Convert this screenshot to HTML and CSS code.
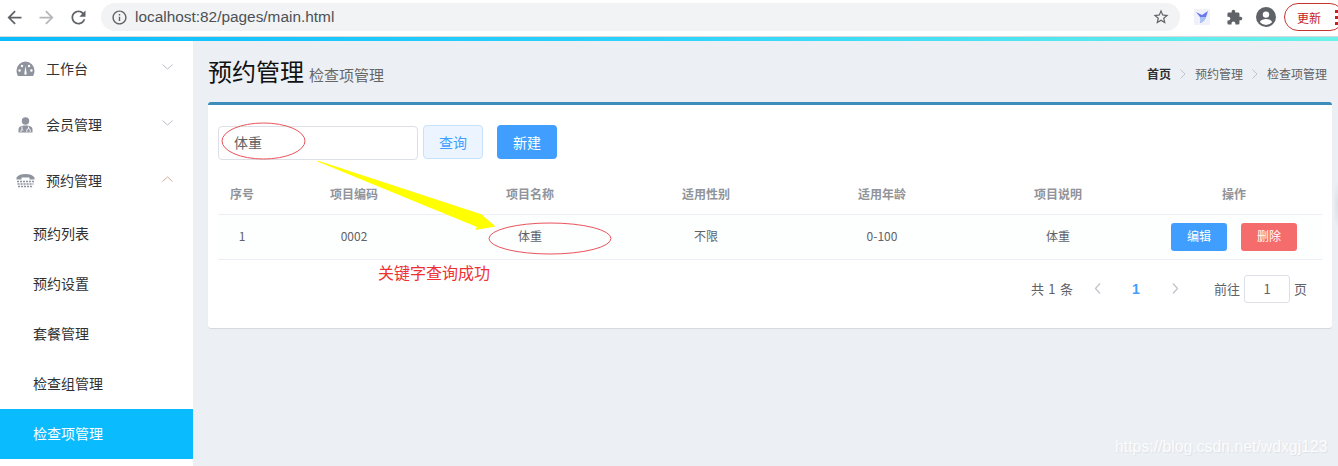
FILE: index.html
```html
<!DOCTYPE html>
<html lang="zh-CN">
<head>
<meta charset="utf-8">
<title>main</title>
<link rel="stylesheet" href="styles.css">
</head>
<body>
<div class="browser">
  <svg class="tb-icon back" width="21" height="21" viewBox="0 0 24 24"><path d="M20 11H7.830l5.590-5.590L12 4l-8 8 8 8 1.410-1.410L7.830 13H20v-2z" fill="#5f6368"/></svg>
  <svg class="tb-icon fwd" width="21" height="21" viewBox="0 0 24 24"><path d="M12 4l-1.410 1.410L16.170 11H4v2h12.170l-5.580 5.590L12 20l8-8z" fill="#b4b6b9"/></svg>
  <svg class="tb-icon reload" width="21" height="21" viewBox="0 0 24 24"><path d="M17.650 6.350C16.200 4.900 14.210 4 12 4c-4.420 0-7.990 3.580-7.990 8s3.570 8 7.990 8c3.730 0 6.840-2.550 7.730-6h-2.080c-.82 2.330-3.040 4-5.650 4-3.310 0-6-2.690-6-6s2.690-6 6-6c1.660 0 3.140.69 4.220 1.780L13 11h7V4l-2.350 2.350z" fill="#5f6368"/></svg>
  <div class="omnibox">
    <svg class="info" width="17" height="17" viewBox="0 0 24 24"><path d="M11 7h2v2h-2zm0 4h2v6h-2zm1-9C6.480 2 2 6.480 2 12s4.480 10 10 10 10-4.480 10-10S17.520 2 12 2zm0 18c-4.410 0-8-3.590-8-8s3.590-8 8-8 8 3.590 8 8-3.590 8-8 8z" fill="#5f6368"/></svg>
    <span class="url">localhost:82/pages/main.html</span>
    <svg class="star" width="18" height="18" viewBox="0 0 24 24"><path d="M22 9.240l-7.190-.62L12 2 9.190 8.630 2 9.240l5.460 4.730L5.820 21 12 17.270 18.180 21l-1.630-7.030L22 9.240zM12 15.400l-3.760 2.270 1-4.280-3.320-2.880 4.380-.38L12 6.100l1.710 4.040 4.380.38-3.320 2.880 1 4.280L12 15.400z" fill="#5f6368"/></svg>
  </div>
  <svg class="ext-bird" width="16" height="16" viewBox="0 0 16 16"><rect width="16" height="16" fill="#f0f1fb"/><path d="M2 3l6 3 6-4-2 6c-1 3-3 5-6 6 1-2 1-4 0-6z" fill="#6a78f0"/><path d="M6 8c1 2 1 4 0 6 3-1 5-3 6-6z" fill="#a9c7f5"/></svg>
  <svg class="ext-puzzle" width="17" height="17" viewBox="0 0 24 24"><path d="M20.500 11H19V7c0-1.100-.9-2-2-2h-4V3.500C13 2.120 11.880 1 10.500 1S8 2.120 8 3.500V5H4c-1.100 0-1.990.9-1.990 2v3.800H3.500c1.490 0 2.700 1.210 2.700 2.700s-1.210 2.700-2.700 2.700H2V20c0 1.100.9 2 2 2h3.800v-1.500c0-1.490 1.210-2.700 2.700-2.700 1.490 0 2.700 1.210 2.700 2.700V22H17c1.100 0 2-.9 2-2v-4h1.500c1.380 0 2.500-1.120 2.500-2.500S21.880 11 20.500 11z" fill="#5f6368"/></svg>
  <svg class="avatar" width="20" height="20" viewBox="0 0 20 20"><circle cx="10" cy="10" r="10" fill="#5f6368"/><circle cx="10" cy="7.600" r="3.200" fill="#fff"/><path d="M3.800 15c1.400-2.200 3.700-3 6.200-3s4.800.8 6.200 3a8 8 0 0 1-12.400 0z" fill="#fff"/></svg>
  <div class="update"><span>更新</span><i class="dots"></i></div>
</div>
<div class="rainbow"></div>
<div class="app">
  <aside class="sidebar">
    <div class="menu-item">
      <svg class="menu-icon" width="19" height="16" viewBox="0 0 19 16"><path d="M9.500.5a9 9 0 0 0-9 9c0 2 .6 3.800 1.400 5.500h15.200c.8-1.700 1.400-3.500 1.400-5.500a9 9 0 0 0-9-9z" fill="#8e939e"/><g fill="#fff"><circle cx="3.600" cy="9.500" r="1.200"/><circle cx="6" cy="5" r="1.200"/><circle cx="13" cy="5" r="1.200"/><circle cx="15.400" cy="9.500" r="1.200"/><path d="M8.300 12.500 9.500 5l1.200 7.500a1.200 1.200 0 1 1-2.400 0z"/></g></svg>
      <span class="menu-label">工作台</span>
      <svg class="chev" width="11" height="6" viewBox="0 0 11 6"><path d="M.5.5l5 4.500 5-4.500" fill="none" stroke="#b9bec9"/></svg>
    </div>
    <div class="menu-item">
      <svg class="menu-icon" width="19" height="16" viewBox="0 0 19 16"><circle cx="9.500" cy="4" r="3.700" fill="#8e939e"/><path d="M2.500 15.500v-3C2.500 9.500 5.500 8.500 9.500 8.500s7 1 7 4v3z" fill="#8e939e"/><path d="M6 9.500v2.500M5 15v-1.500a1 1 0 0 1 2 0M12.500 9.500v2M10.800 15v-1.700a1.700 1.700 0 0 1 3.400 0V15" fill="none" stroke="#fff" stroke-width=".9"/></svg>
      <span class="menu-label">会员管理</span>
      <svg class="chev" width="11" height="6" viewBox="0 0 11 6"><path d="M.5.5l5 4.500 5-4.500" fill="none" stroke="#b9bec9"/></svg>
    </div>
    <div class="menu-item">
      <svg class="menu-icon" width="19" height="16" viewBox="0 0 19 16"><path d="M.5 6.500V4.500C2 2 5.500 1 9.500 1s7.500 1 9 3.500v2h-5V4.500h-8v2z" fill="#8e939e"/><path d="M1 8.500h17M1.500 11h16M2 13.500h15" stroke="#8e939e" stroke-width="1.700" stroke-dasharray="2.100 .9"/></svg>
      <span class="menu-label">预约管理</span>
      <svg class="chev" width="11" height="6" viewBox="0 0 11 6"><path d="M.5 5.500l5-4.500 5 4.500" fill="none" stroke="#d4a89a"/></svg>
    </div>
    <div class="sub-item">预约列表</div>
    <div class="sub-item">预约设置</div>
    <div class="sub-item">套餐管理</div>
    <div class="sub-item">检查组管理</div>
    <div class="sub-item active">检查项管理</div>
  </aside>
  <main class="content">
    <header class="page-head">
      <h1 class="page-title">预约管理<small class="page-sub">检查项管理</small></h1>
      <nav class="crumbs">
        <b class="crumb-home">首页</b>
        <svg class="crumb-sep" width="6" height="10" viewBox="0 0 6 10"><path d="M.5.5 5 5 .5 9.500" fill="none" stroke="#c0c4cc"/></svg>
        <span>预约管理</span>
        <svg class="crumb-sep" width="6" height="10" viewBox="0 0 6 10"><path d="M.5.5 5 5 .5 9.500" fill="none" stroke="#c0c4cc"/></svg>
        <span>检查项管理</span>
      </nav>
    </header>
    <section class="card">
      <div class="filters">
        <div class="search-input">体重</div>
        <div class="btn btn-query">查询</div>
        <div class="btn btn-new">新建</div>
      </div>
      <table class="grid">
        <colgroup><col class="col-index"><col><col><col><col><col><col></colgroup>
        <thead>
          <tr><th>序号</th><th>项目编码</th><th>项目名称</th><th>适用性别</th><th>适用年龄</th><th>项目说明</th><th>操作</th></tr>
        </thead>
        <tbody>
          <tr>
            <td>1</td><td>0002</td><td>体重</td><td>不限</td><td>0-100</td><td>体重</td>
            <td><div class="ops"><span class="mini mini-blue">编辑</span><span class="mini mini-red">删除</span></div></td>
          </tr>
        </tbody>
      </table>
      <div class="pager">
        <span class="total">共 1 条</span>
        <svg class="pg-arrow" width="7" height="11" viewBox="0 0 7 11"><path d="M6 .5 1.500 5.500 6 10.500" fill="none" stroke="#c0c4cc" stroke-width="1.300"/></svg>
        <b class="pg-num">1</b>
        <svg class="pg-arrow" width="7" height="11" viewBox="0 0 7 11"><path d="M1 .5 5.500 5.500 1 10.500" fill="none" stroke="#c0c4cc" stroke-width="1.300"/></svg>
        <span class="goto">前往</span>
        <div class="pg-input">1</div>
        <span>页</span>
      </div>
    </section>
  </main>
</div>
<svg class="annot" width="1338" height="466" viewBox="0 0 1338 466">
  <ellipse cx="263.500" cy="141" rx="41.500" ry="18" fill="none" stroke="#e9545c"/>
  <ellipse cx="550" cy="238.500" rx="61" ry="15.500" fill="none" stroke="#e9545c"/>
  <polygon points="317.500,160.500 482,214.500 481,214 495.500,226.500 475,230 477,227 317.500,161.500" fill="#ffff00"/>
</svg>
<div class="annot-text">关键字查询成功</div>
<div class="edge-shade"></div>
<div class="watermark">https://blog.csdn.net/wdxgj123</div>
</body>
</html>
```
FILE: styles.css
```css
* { box-sizing: border-box; }
html, body { margin: 0; padding: 0; }
body {
  width: 1338px;
  height: 466px;
  overflow: hidden;
  position: relative;
  font-family: "Noto Sans CJK SC", "Liberation Sans", sans-serif;
  background: #ecf0f5;
  display: flex;
  flex-direction: column;
}
.browser {
  height: 37px;
  flex: none;
  background: #fff;
  border-bottom: 1px solid #d8d9da;
  display: flex;
  align-items: center;
  padding: 0 0 2px 4px;
  overflow: hidden;
}
.tb-icon { flex: none; }
.fwd { margin-left: 11px; }
.reload { margin-left: 11px; }
.omnibox {
  margin-left: 12px;
  width: 1079px;
  height: 28px;
  flex: none;
  border-radius: 14px;
  background: #f1f3f4;
  display: flex;
  align-items: center;
  padding: 0 10px 0 10px;
}
.url {
  margin-left: 7px;
  font-family: "Liberation Sans", sans-serif;
  font-size: 15.400px;
  color: #4d5156;
  flex: 1;
}
.ext-bird { margin-left: 14px; flex: none; }
.ext-puzzle { margin-left: 16px; flex: none; }
.avatar { margin-left: 13px; flex: none; }
.update {
  margin-left: 8px;
  width: 60px;
  flex: none;
  height: 28px;
  border: 1px solid #c5352d;
  border-radius: 14px;
  display: flex;
  align-items: center;
  padding-left: 12px;
  font-size: 12px;
  color: #c5221f;
}
.dots {
  margin-left: 14px;
  width: 3px;
  height: 3px;
  background: #c5221f;
  box-shadow: 0 -6px 0 #c5221f, 0 6px 0 #c5221f;
  flex: none;
}
.rainbow {
  height: 4px;
  flex: none;
  background: linear-gradient(90deg, #0abcfe 0%, #2fd3fb 50%, #6cf3e8 100%);
}
.app { flex: 1; display: flex; min-height: 0; }
.sidebar { width: 193px; flex: none; background: #fff; }
.menu-item {
  height: 56px;
  display: flex;
  align-items: center;
  padding-left: 16px;
  font-size: 14px;
  color: #303133;
}
.menu-icon { flex: none; }
.menu-label { margin-left: 11px; flex: 1; line-height: 20px; margin-top: -2px; }
.chev { flex: none; margin-right: 20px; margin-top: -4px; }
.sub-item {
  height: 50px;
  line-height: 48px;
  padding-left: 33px;
  font-size: 14px;
  color: #303133;
}
.sub-item.active { background: #0abcfe; color: #fff; }
.content { flex: 1; padding: 0 6px 0 15px; min-width: 0; }
.page-head {
  height: 61px;
  display: flex;
  align-items: center;
  justify-content: space-between;
  padding: 2px 5px 0 0;
}
.page-title { margin: 0; font-size: 24px; font-weight: 400; color: #111; line-height: 34px; }
.page-sub { margin-left: 5px; font-size: 15px; color: #666; }
.crumbs { display: flex; align-items: center; font-size: 12px; color: #606266; margin-top: 2px; }
.crumb-home { color: #303133; font-weight: 700; }
.crumb-sep { margin: 0 9px; }
.card {
  background: #fff;
  border-top: 3px solid #3c8dbc;
  border-radius: 3px;
  height: 226px;
  padding: 20px 10px 0;
  box-shadow: 0 1px 1px rgba(0,0,0,.1);
}
.filters { display: flex; align-items: flex-start; height: 49px; }
.search-input {
  width: 200px;
  height: 34px;
  margin-top: 1px;
  border: 1px solid #dcdfe6;
  border-radius: 4px;
  padding-left: 15px;
  line-height: 30px;
  font-size: 14px;
  color: #606266;
}
.btn {
  width: 60px;
  height: 34px;
  border-radius: 4px;
  font-size: 14px;
  text-align: center;
  line-height: 34px;
}
.btn-query {
  margin-left: 5px;
  background: #ecf5ff;
  border: 1px solid #c6e2ff;
  color: #409eff;
  line-height: 32px;
}
.btn-new { margin-left: 14px; background: #409eff; color: #fff; }
.grid {
  width: 1104px;
  border-collapse: collapse;
  table-layout: fixed;
  font-size: 12px;
  color: #606266;
}
.col-index { width: 48px; }
.grid th {
  height: 40px;
  border-bottom: 1px solid #ebeef5;
  font-weight: 700;
  color: #909399;
  text-align: center;
  padding: 0;
}
.grid td {
  height: 45px;
  border-bottom: 1px solid #ebeef5;
  background: #fdfefe;
  text-align: center;
  padding: 0 0 2px;
}
.ops { display: flex; justify-content: center; gap: 14px; margin-top: 2px; }
.mini {
  width: 56px;
  height: 28px;
  line-height: 26px;
  border-radius: 3px;
  color: #fff;
}
.mini-blue { background: #409eff; }
.mini-red { background: #f56c6c; }
.pager {
  display: flex;
  align-items: center;
  justify-content: flex-end;
  height: 28px;
  margin-top: 15px;
  padding-right: 15px;
  font-size: 13px;
  color: #606266;
}
.total { word-spacing: 1.500px; }
.pg-arrow { margin-left: 21px; flex: none; }
.pg-num { margin-left: 31px; margin-right: 10px; width: 8px; font-size: 14px; color: #409eff; font-family: "Liberation Sans", sans-serif; }
.pg-num + .pg-arrow { margin-left: 22px; }
.goto { margin-left: 35px; }
.pg-input {
  width: 46px;
  height: 28px;
  margin: 0 4px;
  border: 1px solid #dcdfe6;
  border-radius: 3px;
  text-align: center;
  line-height: 26px;
}
.annot { position: absolute; left: 0; top: 0; pointer-events: none; }
.annot-text {
  position: absolute;
  left: 378px;
  top: 261px;
  font-size: 16px;
  line-height: 22px;
  color: #ee3232;
}
.edge-shade {
  position: absolute;
  right: 0;
  top: 180px;
  width: 5px;
  height: 50px;
  background: radial-gradient(ellipse at right, rgba(0,0,0,.07), rgba(0,0,0,0) 70%);
}
.watermark {
  position: absolute;
  left: 1115px;
  top: 437px;
  font-family: "Liberation Sans", sans-serif;
  font-size: 15.800px;
  line-height: 20px;
  color: #fbfcfd;
  text-shadow: 1px 1px 1px #dde0e4;
}
```
